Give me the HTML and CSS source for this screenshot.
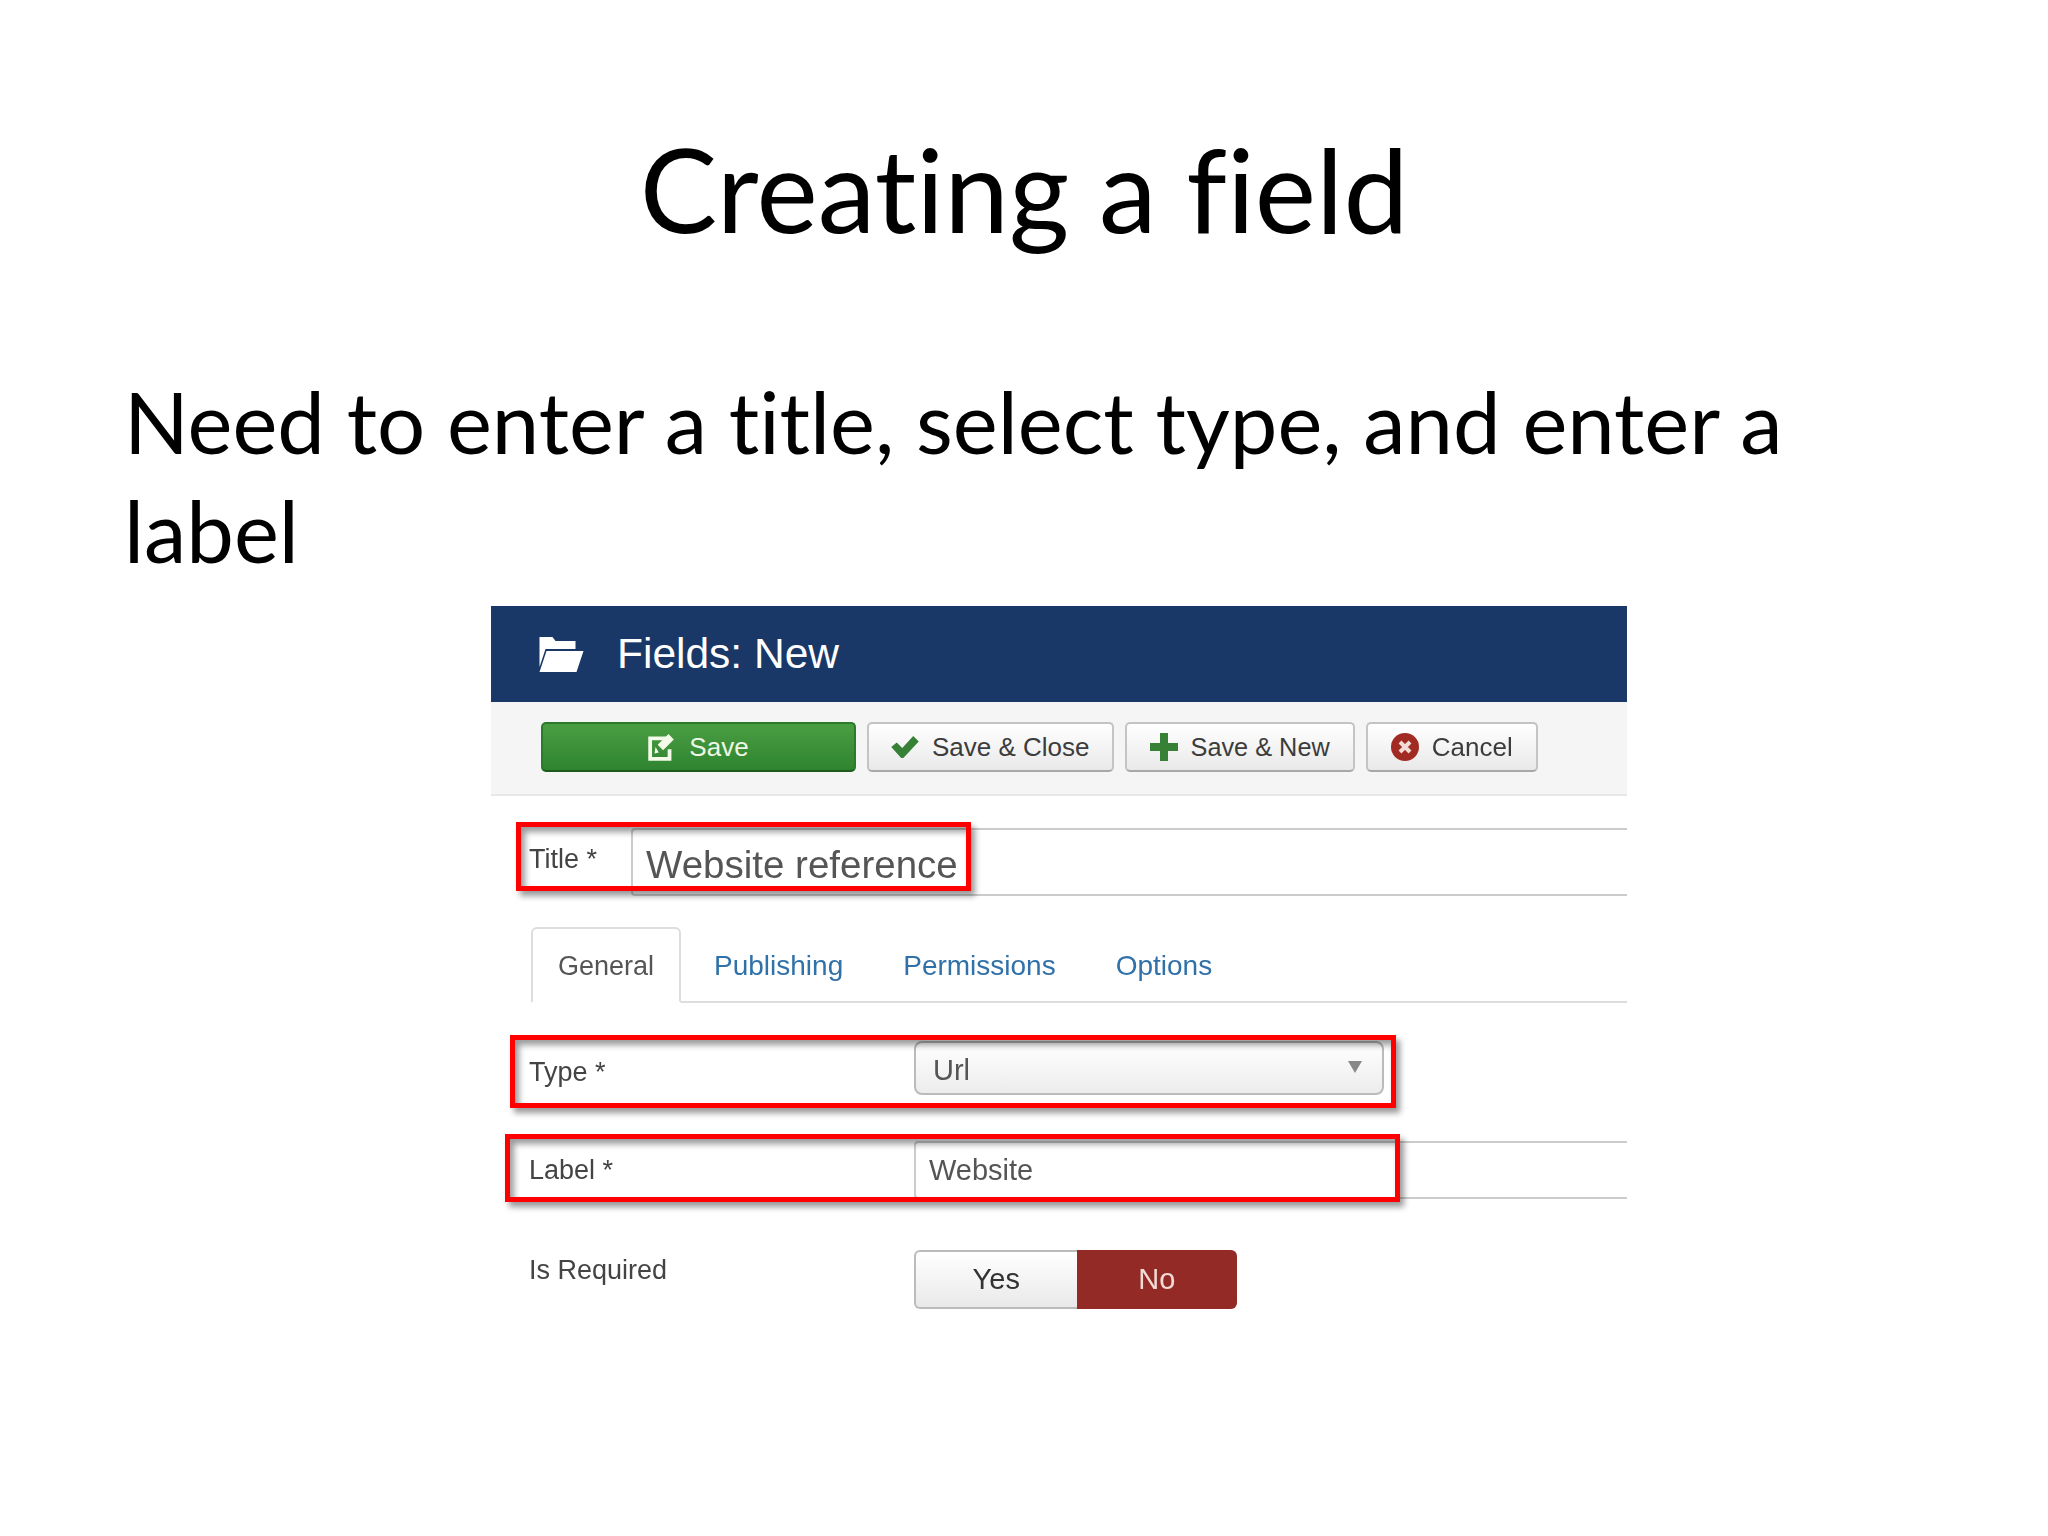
FILE: index.html
```html
<!DOCTYPE html>
<html lang="en">
<head>
  <meta charset="UTF-8">
  <title>Creating a field</title>
  <link rel="stylesheet" href="styles.css">
</head>
<body>
<div class="slide">
  <h1>Creating a field</h1>
  <p class="lead">Need to enter a title, select type, and enter a label</p>
  <div class="shot">
    <div class="head">
      <svg class="folder" viewBox="0 0 44 35"><path d="M0 30V0h13l3 4h20v8H6zM7 14h37l-7 21H0z"/></svg>
      <span>Fields: New</span>
    </div>
    <div class="toolbar">
      <button class="btn btnSave">
        <svg class="ico" viewBox="0 0 26 26"><path fill="none" stroke="#f4fbe8" stroke-width="3.500" d="M17 5H2v19h18v-9"/><path fill="#f4fbe8" d="M7 13l3 5-4 1zM9 11L19 1l5 5-10 10z"/></svg>
        Save
      </button>
      <button class="btn">
        <svg class="ico icoCheck" viewBox="0 0 25 20"><path fill="#378137" d="M0 10l5-4 5 5L20 0l5 5-14 15H9z"/></svg>
        Save &amp; Close
      </button>
      <button class="btn btnNew">
        <svg class="ico" viewBox="0 0 28 28"><path fill="#378137" d="M10 0h8v10h10v8H18v10h-8V18H0v-8h10z"/></svg>
        Save &amp; New
      </button>
      <button class="btn btnCancel">
        <svg class="ico" viewBox="0 0 28 28"><circle cx="14" cy="14" r="14" fill="#a12b22"/><path stroke="#f3dcd8" stroke-width="4" d="M9 9l10 10M19 9L9 19"/></svg>
        Cancel
      </button>
    </div>
    <div class="titleRow">
      <label>Title *</label>
      <div class="titleInput">Website reference</div>
      <div class="redBox boxTitle"></div>
    </div>
    <div class="tabs">
      <a class="tab active">General</a>
      <a class="tab">Publishing</a>
      <a class="tab">Permissions</a>
      <a class="tab">Options</a>
    </div>
    <div class="row rowType">
      <label>Type *</label>
      <div class="select">Url<i class="caret"></i></div>
      <div class="redBox boxType"></div>
    </div>
    <div class="row rowLabel">
      <label>Label *</label>
      <div class="textInput">Website</div>
      <div class="redBox boxLabel"></div>
    </div>
    <div class="row rowReq">
      <label>Is Required</label>
      <div class="toggle">
        <span class="yes">Yes</span>
        <span class="no">No</span>
      </div>
    </div>
  </div>
</div>
</body>
</html>
```
FILE: styles.css
```css
*{
  margin: 0;
  padding: 0;
  box-sizing: border-box;
}
html,body{
  width: 100%;
  height: 100%;
  background-color: #fff;
}
body{
  overflow: hidden;
}
.slide{
  width: 2048px;
  height: 1536px;
  font-family: "Lato", "Liberation Sans", sans-serif;
  font-variant-ligatures: none;
  color: #000;
}
h1{
  font-size: 116px;
  font-weight: 400;
  line-height: 132px;
  text-align: center;
  padding-top: 123px;
}
.lead{
  font-size: 85px;
  line-height: 109px;
  padding: 112px 200px 0 124px;
}
/*screenshot*/
.shot{
  width: 1136px;
  margin: 21px 0 0 491px;
  font-family: "Liberation Sans", sans-serif;
  color: #555;
  filter: blur(.7px);
}
.head{
  height: 96px;
  background-color: #1a3867;
  color: #fff;
  display: flex;
  align-items: center;
  padding-left: 48px;
  font-size: 42.500px;
}
.folder{
  width: 45px;
  height: 35px;
  fill: #fff;
  margin-right: 33px;
}
.toolbar{
  height: 94px;
  background-color: #f5f5f5;
  border-bottom: 2px solid #e8e8e8;
  display: flex;
  gap: 11px;
  padding: 20px 0 0 50px;
}
.btn{
  height: 50px;
  display: flex;
  align-items: center;
  justify-content: center;
  gap: 13px;
  padding: 0 22px;
  font-family: inherit;
  font-size: 26px;
  color: #3c3c3c;
  background: linear-gradient(#fff, #e9e9e9);
  border: 2px solid #c4c4c4;
  border-bottom-color: #a8a8a8;
  border-radius: 5px;
}
.btnSave{
  width: 315px;
  color: #eef7e4;
  background: linear-gradient(#4a9e42, #2f8430);
  border-color: #2c7a2c;
  border-bottom-color: #1e5a1e;
}
.btnNew{
  font-size: 25.300px;
  padding: 0 23px;
}
.btnCancel{
  padding: 0 23px;
}
.ico{
  width: 28px;
  height: 28px;
}
.icoCheck{
  height: 22px;
}
label{
  font-size: 27px;
  color: #444;
}
.titleRow{
  position: relative;
  height: 68px;
  margin-top: 32px;
  display: flex;
  padding-left: 38px;
}
.titleRow label{
  width: 102px;
  padding-top: 16px;
}
.titleInput{
  flex: 1;
  border: 2px solid #ccc;
  border-right: none;
  border-radius: 4px 0 0 4px;
  font-size: 38.500px;
  line-height: 70px;
  padding-left: 13px;
}
.tabs{
  height: 76px;
  margin-top: 31px;
  margin-left: 40px;
  border-bottom: 2px solid #ddd;
  display: flex;
  font-size: 28px;
  color: #3071a9;
}
.tab{
  height: 76px;
  padding: 23px 27px 0;
  margin-right: 6px;
}
.active{
  width: 150px;
  padding: 22px 0 0 25px;
  font-size: 27px;
  color: #555;
  background-color: #fff;
  border: 2px solid #ddd;
  border-bottom-color: #fff;
  border-radius: 6px 6px 0 0;
}
.row{
  position: relative;
  display: flex;
  padding-left: 38px;
}
.row label{
  width: 385px;
}
.rowType{
  height: 54px;
  margin-top: 38px;
  align-items: center;
}
.rowType label{
  padding-top: 8px;
}
.select{
  width: 470px;
  height: 54px;
  position: relative;
  border: 2px solid #bbb;
  border-radius: 8px;
  background: linear-gradient(#fff, #ececec);
  font-size: 29px;
  line-height: 54px;
  padding-left: 17px;
}
.caret{
  position: absolute;
  right: 20px;
  top: 18px;
  border-left: 7px solid transparent;
  border-right: 7px solid transparent;
  border-top: 12px solid #888;
}
.rowLabel{
  height: 58px;
  margin-top: 46px;
  align-items: center;
}
.textInput{
  flex: 1;
  height: 58px;
  border: 2px solid #ccc;
  border-right: none;
  border-radius: 4px 0 0 4px;
  font-size: 29px;
  line-height: 54px;
  padding-left: 13px;
}
.rowReq{
  margin-top: 51px;
}
.rowReq label{
  padding-top: 5px;
}
.toggle{
  display: flex;
  width: 323px;
  height: 59px;
  font-size: 29px;
  line-height: 59px;
  text-align: center;
}
.yes{
  flex: 1;
  color: #333;
  background: linear-gradient(#fff, #e9e9e9);
  border: 2px solid #bbb;
  border-right: none;
  border-radius: 6px 0 0 6px;
  line-height: 55px;
}
.no{
  flex: 1;
  color: #f3dcd8;
  background-color: #942a25;
  border-radius: 0 6px 6px 0;
}
/*red frames laid over the form*/
.redBox{
  position: absolute;
  border: 5px solid #f00;
  box-shadow: 4px 5px 6px rgba(0,0,0,.4), inset 4px 5px 6px rgba(0,0,0,.4);
}
.boxTitle{
  left: 25px;
  top: -6px;
  width: 455px;
  height: 69px;
}
.boxType{
  left: 19px;
  top: -6px;
  width: 886px;
  height: 73px;
}
.boxLabel{
  left: 14px;
  top: -7px;
  width: 895px;
  height: 68px;
}
```
